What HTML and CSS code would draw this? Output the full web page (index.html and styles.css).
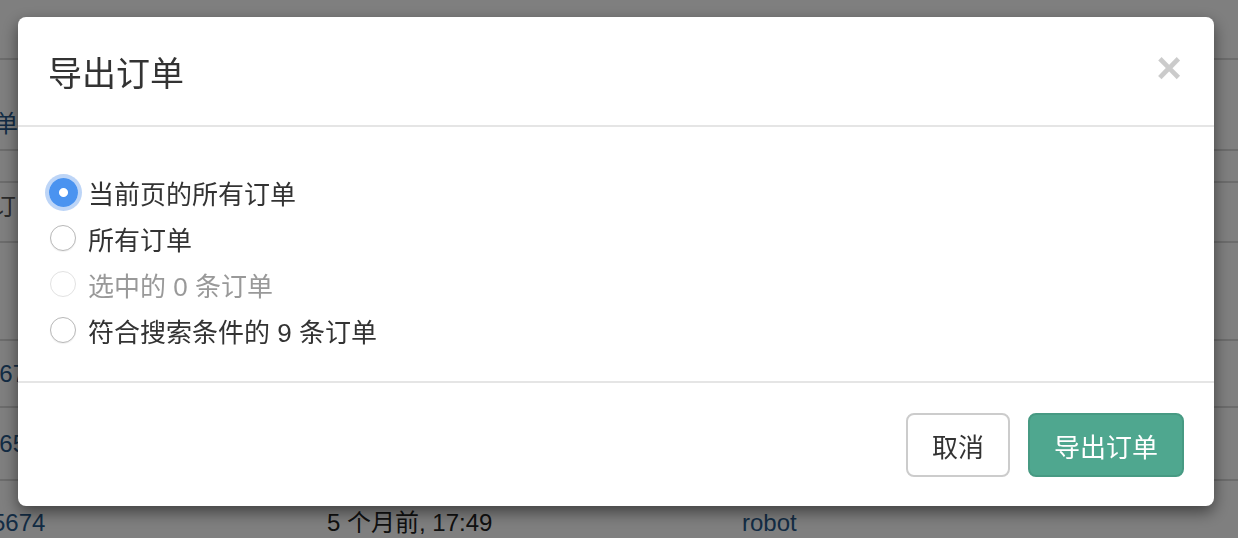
FILE: index.html
```html
<!DOCTYPE html>
<html lang="zh-CN">
<head>
    <meta charset="UTF-8">
    <meta name="viewport" content="width=device-width, initial-scale=1.0">
    <title>导出订单</title>
    <link rel="stylesheet" href="styles.css">
</head>
<body>

<!-- Page behind the dialog -->
<table class="orders">
    <tr class="row-a"><td class="id"></td><td></td><td></td></tr>
    <tr class="row-b"><td class="id"><span class="link cut-1">订单</span></td><td></td><td></td></tr>
    <tr class="row-c"><td class="id"></td><td></td><td></td></tr>
    <tr class="row-d"><td class="id"><span class="muted cut-2">订</span></td><td></td><td></td></tr>
    <tr class="row-e"><td class="id"></td><td></td><td></td></tr>
    <tr class="row-f"><td class="id"><span class="link cut-3">5673</span></td><td></td><td></td></tr>
    <tr class="row-g"><td class="id"><span class="link cut-3">5659</span></td><td></td><td></td></tr>
    <tr class="row-h">
        <td class="id"><span class="link cut-4">5674</span></td>
        <td class="time">5 个月前, 17:49</td>
        <td class="user"><span class="link">robot</span></td>
    </tr>
</table>

<!-- Export dialog -->
<div class="backdrop">
    <div class="modal">
        <div class="modal-header">
            <h4 class="modal-title">导出订单</h4>
            <button class="close" type="button">&times;</button>
        </div>
        <div class="modal-body">
            <label class="radio">
                <input type="radio" name="scope" checked>
                <span>当前页的所有订单</span>
            </label>
            <label class="radio">
                <input type="radio" name="scope">
                <span>所有订单</span>
            </label>
            <label class="radio disabled">
                <input type="radio" name="scope" disabled>
                <span>选中的 0 条订单</span>
            </label>
            <label class="radio">
                <input type="radio" name="scope">
                <span>符合搜索条件的 9 条订单</span>
            </label>
        </div>
        <div class="modal-footer">
            <button class="btn btn-default" type="button">取消</button>
            <button class="btn btn-primary" type="button">导出订单</button>
        </div>
    </div>
</div>

</body>
</html>
```

FILE: styles.css
```css
body {
    font-family: "Liberation Sans", "Noto Sans CJK SC", sans-serif;
    background-color: #fff;
    color: #333;
    margin: 0;
    padding: 0;
    overflow: hidden;
}

/* background table */
.orders {
    width: 100%;
    border-collapse: collapse;
    font-size: 24px;
}
.orders td {
    border-bottom: 2px solid #d8d8d8;
    padding: 0;
    vertical-align: middle;
}
.row-a { height: 59px; }
.row-b { height: 91px; }
.row-b td { vertical-align: top; padding-top: 44px; }
.row-c { height: 32px; }
.row-d { height: 60px; }
.row-d td { vertical-align: top; padding-top: 4px; }
.row-e { height: 98px; }
.row-f { height: 67px; }
.row-g { height: 73px; }
.row-h { height: 60px; }
.row-h td {
    vertical-align: top;
    padding-top: 28px;
    line-height: 28px;
}
.id {
    width: 320px;
    white-space: nowrap;
    overflow: hidden;
}
.time {
    width: 415px;
    padding-left: 7px !important;
    color: #222;
}
.user { text-align: left; }
.link { color: #28598a; }
.muted { color: #555; }
.cut-1 { margin-left: -30px; }
.cut-2 { margin-left: -8px; }
.cut-3 { margin-left: -14px; }
.cut-4 { margin-left: -8px; }

/* dialog */
.backdrop {
    position: fixed;
    inset: 0;
    background: rgba(0, 0, 0, 0.5);
    padding: 17px 24px 0 18px;
}
.modal {
    width: 1196px;
    background: #fff;
    border-radius: 8px;
    box-shadow: 0 6px 16px rgba(0, 0, 0, 0.5);
}
.modal-header {
    height: 108px;
    padding: 0 32px 0 30px;
    display: flex;
    align-items: center;
    justify-content: space-between;
    border-bottom: 2px solid #e5e5e5;
}
.modal-title {
    margin: 0;
    font-size: 34px;
    font-weight: normal;
    color: #333;
}
.close {
    border: none;
    background: none;
    padding: 0;
    font-family: "Liberation Sans", sans-serif;
    font-size: 44px;
    font-weight: bold;
    line-height: 1;
    color: #000;
    opacity: 0.2;
    margin-top: -6px;
}
.modal-body {
    padding: 42px 30px 28px;
}
.radio {
    display: flex;
    align-items: center;
    height: 46px;
    font-size: 26px;
    color: #333;
}
.radio input {
    appearance: none;
    -webkit-appearance: none;
    width: 26px;
    height: 26px;
    margin: 0 12px 0 2px;
    border-radius: 50%;
    border: 1px solid #b8b8b8;
    background: #fff;
    box-shadow: 0 1px 1px rgba(0, 0, 0, 0.06);
    flex: none;
}
.radio input:checked {
    width: 29px;
    height: 29px;
    margin: 0 10px 0 1px;
    border: none;
    background: radial-gradient(circle, #fff 0 4px, #4a93f0 5px);
    box-shadow: 0 0 0 4px rgba(90, 150, 235, 0.4);
}
.radio.disabled { color: #999; }
.radio input:disabled {
    border-color: #e2e2e2;
    background: #fff;
    box-shadow: none;
}
.modal-footer {
    border-top: 2px solid #e5e5e5;
    padding: 30px 30px 29px;
    display: flex;
    justify-content: flex-end;
    gap: 18px;
}
.btn {
    height: 64px;
    padding: 0 24px;
    font-family: "Liberation Sans", "Noto Sans CJK SC", sans-serif;
    font-size: 26px;
    border-radius: 8px;
    cursor: pointer;
}
.btn-default {
    background: #fff;
    color: #333;
    border: 2px solid #ccc;
}
.btn-primary {
    background: #4fa78f;
    color: #fff;
    border: 2px solid #479a83;
}
```
